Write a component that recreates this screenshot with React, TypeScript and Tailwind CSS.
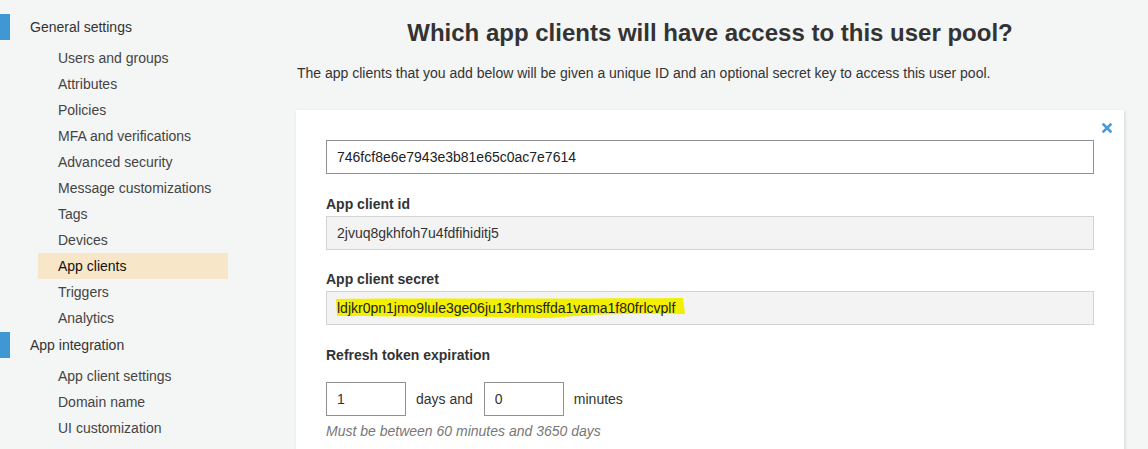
import React from "react";

const general = [
  "Users and groups",
  "Attributes",
  "Policies",
  "MFA and verifications",
  "Advanced security",
  "Message customizations",
  "Tags",
  "Devices",
  "App clients",
  "Triggers",
  "Analytics",
];

const integration = ["App client settings", "Domain name", "UI customization"];

function SideHeading({ label }: { label: string }) {
  return (
    <div className="flex h-[26px] items-center">
      <div className="h-[26px] w-[10px] bg-[#3f97d4]" />
      <span className="ml-[20px] text-[14px] text-[#333]">{label}</span>
    </div>
  );
}

function SideItem({ label, active }: { label: string; active?: boolean }) {
  return (
    <div
      className={
        "ml-[38px] flex h-[26px] w-[190px] items-center pl-[20px] text-[14px] " +
        (active ? "bg-[#f8e6c8] text-[#111]" : "text-[#444]")
      }
    >
      {label}
    </div>
  );
}

function Label({ children }: { children: React.ReactNode }) {
  return <div className="h-[20px] text-[14px] font-bold leading-[20px] text-[#333]">{children}</div>;
}

export default function App() {
  return (
    <div
      className="flex h-[449px] w-[1148px] overflow-hidden bg-[#f4f5f5] text-[#333]"
      style={{ fontFamily: '"Liberation Sans", Arial, sans-serif' }}
    >
      <aside className="w-[296px] shrink-0 pt-[14px]">
        <SideHeading label="General settings" />
        <div className="mt-[5px] mb-[1px]">
          {general.map((g) => (
            <SideItem key={g} label={g} active={g === "App clients"} />
          ))}
        </div>
        <SideHeading label="App integration" />
        <div className="mt-[5px]">
          {integration.map((g) => (
            <SideItem key={g} label={g} />
          ))}
        </div>
      </aside>

      <main className="w-[828px] shrink-0">
        <h1 className="mt-[18px] text-center text-[24px] font-bold leading-[30px] text-[#333]">
          Which app clients will have access to this user pool?
        </h1>
        <p className="mt-[16px] pl-[1px] text-[14px] leading-[18px] text-[#333]">
          The app clients that you add below will be given a unique ID and an optional secret key to access this user pool.
        </p>

        <div className="relative mt-[28px] h-[400px] bg-white px-[30px] pt-[30px] shadow-[1px_1px_3px_rgba(0,0,0,0.12)]">
          <svg
            className="absolute right-[12px] top-[13px]"
            width="10"
            height="10"
            viewBox="0 0 10 10"
          >
            <path d="M1.5 1.5 L8.5 8.5 M8.5 1.5 L1.5 8.5" stroke="#4a9ad7" strokeWidth="2.6" strokeLinecap="square" />
          </svg>

          <div className="flex h-[34px] items-center border border-[#8e9292] bg-white pl-[10px] text-[14px] text-[#222]">
            746fcf8e6e7943e3b81e65c0ac7e7614
          </div>

          <div className="mt-[20px]">
            <Label>App client id</Label>
          </div>
          <div className="mt-[2px] flex h-[34px] items-center border border-[#d2d4d4] bg-[#f3f3f3] pl-[10px] text-[14px] text-[#333]">
            2jvuq8gkhfoh7u4fdfihiditj5
          </div>

          <div className="mt-[19px]">
            <Label>App client secret</Label>
          </div>
          <div className="mt-[2px] flex h-[34px] items-center border border-[#d2d4d4] bg-[#f3f3f3] pl-[10px] text-[14px] text-[#222]">
            <span className="relative">
              <svg
                className="absolute left-[-4px] top-[-3px]"
                width="360"
                height="28"
                viewBox="0 0 360 28"
              >
                <path
                  d="M3 4 C80 3 200 4 350 3 L352 19 C300 18 260 19 230 22 C200 25 170 21 120 22 C80 22 40 21 4 21 Z"
                  fill="#f2f000"
                />
              </svg>
              <span className="relative">ldjkr0pn1jmo9lule3ge06ju13rhmsffda1vama1f80frlcvplf</span>
            </span>
          </div>

          <div className="mt-[20px]">
            <Label>Refresh token expiration</Label>
          </div>
          <div className="mt-[17px] flex items-center text-[14px] text-[#333]">
            <div className="flex h-[34px] w-[80px] items-center border border-[#8e9292] pl-[10px]">1</div>
            <span className="ml-[10px]">days and</span>
            <div className="ml-[11px] flex h-[34px] w-[80px] items-center border border-[#8e9292] pl-[10px]">0</div>
            <span className="ml-[10px]">minutes</span>
          </div>
          <div className="mt-[6px] text-[14px] italic leading-[18px] text-[#777]">Must be between 60 minutes and 3650 days</div>
        </div>
      </main>
    </div>
  );
}
